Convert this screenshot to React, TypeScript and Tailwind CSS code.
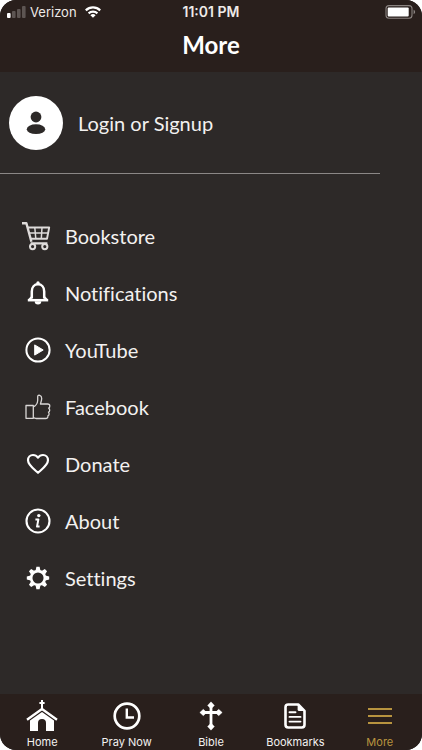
import type { ReactNode } from "react"

interface Item {
  label: string
  icon: ReactNode
}

function CartIcon() {
  return (
    <svg width="32" height="30" viewBox="2 0 32 30" fill="none" stroke="#dedbda" strokeLinejoin="round">
      <path d="M2 2.3h4.400l5 18.500" strokeWidth="2.400" />
      <path d="M7.800 6.500h21.400l-2.200 11.300H10.700" strokeWidth="1.900" />
      <path d="M9 12h19M14.800 6.500l1 11.300M22 6.500l-.7 11.300" strokeWidth="1.500" />
      <path d="M10.700 22.400h16.700" strokeWidth="2.200" />
      <circle cx="12.600" cy="25.600" r="2.600" strokeWidth="2" />
      <circle cx="24.800" cy="25.600" r="2.600" strokeWidth="2" />
    </svg>
  )
}

function BellIcon() {
  return (
    <svg width="22" height="24" viewBox="0 0 22 24" fill="none" stroke="white">
      <path d="M4.800 17.600V10.400C4.800 6.200 7.400 3.200 11 3.200s6.200 3 6.200 7.200v7.200" strokeWidth="2.500" />
      <path d="M9.300 3.200V2a1.700 1.700 0 0 1 3.400 0v1.200z" fill="white" stroke="none" />
      <path d="M1.900 19l3.200-3.200M20.100 19l-3.200-3.200" strokeWidth="2.200" />
      <path d="M.8 19.200h20.400" strokeWidth="2.500" />
      <path d="M7.700 20.300h6.600a3.300 3.300 0 0 1-6.600 0z" fill="white" stroke="none" />
    </svg>
  )
}

function PlayIcon() {
  return (
    <svg width="26" height="26" viewBox="0 0 26 26">
      <circle cx="13" cy="13" r="11.600" fill="none" stroke="white" strokeWidth="2" />
      <path d="M9.700 7.900v10.200l8.500-5.100z" fill="white" stroke="white" strokeLinejoin="round" />
    </svg>
  )
}

function ThumbIcon() {
  return (
    <svg width="26" height="26" viewBox="0 0 26 26" fill="none" stroke="#d9d6d5" strokeWidth="1.300" strokeLinejoin="round">
      <path d="M1 11.500h7.300v12.800H1z" />
      <path d="M8.300 12.800c2-.8 4.400-3.500 4.400-6.600V2.400c0-1.800 4-1.700 4 2.200 0 2-1 4.300-1.300 5.400h7.200c1.500 0 2.200 1 2.200 2.100s-.5 1.800-1.100 2.100c.7.500 1 1.100 1 2s-.5 1.700-1.200 2c.5.500.6 1 .6 1.700 0 .9-.5 1.600-1.200 1.900.3 1.500-.7 2.700-2.300 2.700h-9.300c-1.200 0-1.900-.8-3-.8" />
    </svg>
  )
}

function HeartIcon() {
  return (
    <svg width="24" height="22" viewBox="0 0 24 22" fill="none" stroke="white" strokeWidth="2.200" strokeLinejoin="round">
      <path d="M12 19.800C8 16.200 2 12 2 7.200 2 4.200 4.200 2 7 2c2 0 3.800 1 5 2.700C13.200 3 15 2 17 2c2.800 0 5 2.200 5 5.200 0 4.800-6 9-10 12.600z" />
    </svg>
  )
}

function InfoIcon() {
  return (
    <svg width="26" height="26" viewBox="0 0 26 26" fill="none" stroke="white">
      <circle cx="13" cy="13" r="11.500" strokeWidth="2.100" />
      <circle cx="13.800" cy="7.600" r="1.700" fill="white" stroke="none" />
      <path d="M10.400 11.400h3l-1.400 7.200h2.600" strokeWidth="2" strokeLinejoin="round" />
    </svg>
  )
}

function GearIcon() {
  return (
    <svg width="24" height="24" viewBox="0 0 24 24" fill="none" stroke="white">
      <circle cx="12" cy="12" r="6.900" strokeWidth="2.700" />
      {[0, 45, 90, 135, 180, 225, 270, 315].map((a) => (
        <path key={a} d="M9.600 4.600l.8-3.800h3.200l.8 3.800z" fill="white" stroke="none" transform={`rotate(${a} 12 12)`} />
      ))}
    </svg>
  )
}

function ChurchIcon() {
  return (
    <svg width="32" height="32" viewBox="0 0 32 32" fill="none" stroke="white">
      <path d="M16 0v10M13.400 3h5.200" strokeWidth="2" />
      <path d="M1 19.800L16 9l15 10.800" strokeWidth="2.400" />
      <path d="M4 20.500L16 12l12 8.500V31h-8v-8a4 4 0 0 0-8 0v8H4z" fill="white" stroke="none" />
    </svg>
  )
}

function ClockIcon() {
  return (
    <svg width="28" height="28" viewBox="0 0 28 28" fill="none" stroke="white">
      <circle cx="14" cy="14" r="12.300" strokeWidth="2.700" />
      <path d="M13.800 6.500v9H21" strokeWidth="2.400" />
    </svg>
  )
}

function CrossIcon() {
  return (
    <svg width="24" height="30" viewBox="0 0 24 30" fill="white" stroke="white">
      <path d="M12 4v22M4 11.500h16" strokeWidth="2.800" />
      <path d="M12 .8l3.400 3.600-2.200 2.400h-2.400L8.600 4.400zM12 29.200l3.400-3.600-2.200-2.400h-2.400l-2.200 2.400zM.8 11.500l3.500-3.200 2.200 2v2.400l-2.200 2zM23.200 11.500l-3.500-3.200-2.200 2v2.400l2.200 2z" strokeWidth=".4" strokeLinejoin="round" />
    </svg>
  )
}

function DocIcon() {
  return (
    <svg width="22" height="26" viewBox="0 0 22 26" fill="none" stroke="white">
      <path d="M14.200 1.500H4.200a2.700 2.700 0 0 0-2.700 2.700v17.600a2.700 2.700 0 0 0 2.700 2.700h13.600a2.700 2.700 0 0 0 2.700-2.700V7.800z" strokeWidth="2.600" strokeLinejoin="round" />
      <path d="M13.600 1.500v5a1.600 1.600 0 0 0 1.600 1.600h5.300z" fill="white" stroke="none" />
      <path d="M5.500 9.200h6M5.500 13.900h11M5.500 18.600h11" strokeWidth="1.900" strokeLinecap="round" />
    </svg>
  )
}

function MenuIcon() {
  return (
    <svg width="24" height="18" viewBox="0 0 24 18" stroke="currentColor" strokeWidth="2">
      <path d="M0 2h24M0 9h24M0 16h24" />
    </svg>
  )
}

const menu: Item[] = [
  { label: "Bookstore", icon: <CartIcon /> },
  { label: "Notifications", icon: <BellIcon /> },
  { label: "YouTube", icon: <PlayIcon /> },
  { label: "Facebook", icon: <ThumbIcon /> },
  { label: "Donate", icon: <HeartIcon /> },
  { label: "About", icon: <InfoIcon /> },
  { label: "Settings", icon: <GearIcon /> },
]

const tabs: Item[] = [
  { label: "Home", icon: <ChurchIcon /> },
  { label: "Pray Now", icon: <ClockIcon /> },
  { label: "Bible", icon: <CrossIcon /> },
  { label: "Bookmarks", icon: <DocIcon /> },
  { label: "More", icon: <MenuIcon /> },
]

function StatusBar() {
  return (
    <div className="grid h-6 grid-cols-3 items-center px-[6px] font-['Inter',sans-serif] text-[13px] leading-6 text-[#eeeae8]">
      <div className="flex items-center gap-1">
        <svg width="20" height="12" viewBox="0 0 20 12">
          <rect x="1" y="7" width="3.600" height="5" rx="1" fill="white" />
          <rect x="6" y="5" width="3.600" height="7" rx="1" fill="#5d5552" />
          <rect x="11" y="3" width="3.600" height="9" rx="1" fill="#5d5552" />
          <rect x="16" y="0" width="3.600" height="12" rx="1" fill="#5d5552" />
        </svg>
        <span>Verizon</span>
        <svg className="ml-1" width="16" height="12" viewBox="0 0 16 12" fill="none" stroke="white" strokeWidth="2.200">
          <path d="M.8 4.400a10.300 10.300 0 0 1 14.400 0M3.600 7.400a6.300 6.300 0 0 1 8.800 0" />
          <path d="M8 11.800L5.400 9.300a3.800 3.800 0 0 1 5.200 0z" fill="white" stroke="none" />
        </svg>
      </div>
      <span className="text-center text-sm leading-6 font-semibold">11:01 PM</span>
      <svg className="justify-self-end" width="31" height="14" viewBox="0 0 31 14">
        <rect x="1" y=".6" width="26" height="12.600" rx="3" fill="none" stroke="#8a8380" strokeWidth="1.100" />
        <rect x="2.700" y="2.400" width="21" height="9" rx="1" fill="white" />
        <path d="M28.600 4.800v4.400c1-.4 1.500-1.200 1.500-2.200s-.5-1.800-1.500-2.200z" fill="#8a8380" />
      </svg>
    </div>
  )
}

export default function App() {
  return (
    <div className="min-h-screen bg-white">
      <div className="flex min-h-screen flex-col overflow-hidden rounded-2xl bg-[#2d2928] font-['Lato',sans-serif] text-[#f3f1f0]">
        <header className="h-[72px] bg-[#291f1c]">
          <StatusBar />
          <h1 className="text-center text-2xl leading-[42px] font-bold text-white">More</h1>
        </header>

        <main className="flex-1">
          {/* Account */}
          <a href="#login" className="flex items-center gap-[15px] pt-6 pb-[23px] pl-[9px] text-xl">
            <span className="flex size-[54px] items-center justify-center rounded-full bg-white">
              <svg width="20" height="24" viewBox="0 0 20 24" fill="#2d2928">
                <circle cx="10" cy="6" r="5.400" />
                <ellipse cx="10" cy="18.200" rx="9.200" ry="4.900" />
              </svg>
            </span>
            Login or Signup
          </a>
          <hr className="w-[90%] border-[#8b8786]" />

          <ul className="pt-[33px] pb-6">
            {menu.map((m) => (
              <li key={m.label}>
                <a
                  href={`#${m.label.toLowerCase()}`}
                  className="flex h-[57px] items-center gap-[11px] pl-[22px] text-xl [font-variant-ligatures:none]"
                >
                  <span className="flex w-8 items-center justify-center">{m.icon}</span>
                  {m.label}
                </a>
              </li>
            ))}
          </ul>
        </main>

        {/* Tab bar */}
        <nav className="grid h-14 grid-cols-5 bg-[#291f1c] font-['Inter',sans-serif] text-[11px] leading-4">
          {tabs.map((t) => (
            <a
              key={t.label}
              href={`#${t.label.toLowerCase().replace(" ", "-")}`}
              className={t.label === "More" ? "flex flex-col items-center text-[#b8943f]" : "flex flex-col items-center"}
            >
              <span className="flex h-10 items-center pt-1">{t.icon}</span>
              {t.label}
            </a>
          ))}
        </nav>
      </div>
    </div>
  )
}
